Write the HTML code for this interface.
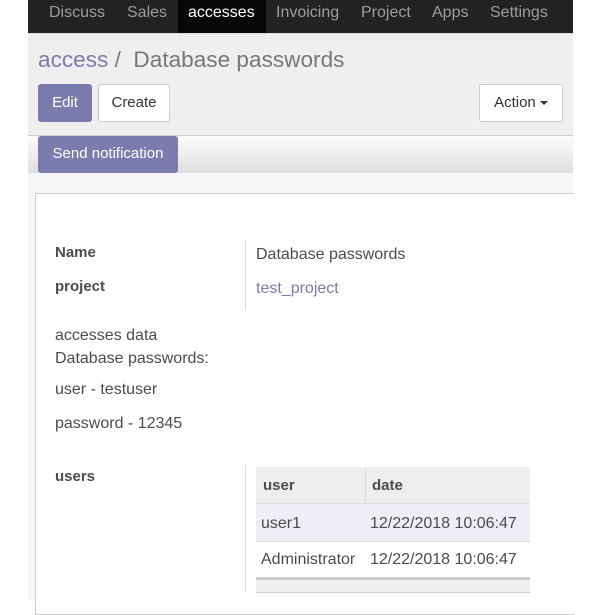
<!DOCTYPE html>
<html><head><style>
body{margin:0;width:600px;height:600px;overflow:hidden;background:#fff;font-family:"Liberation Sans",sans-serif;position:relative;color:#4c4c4c}
.a{position:absolute}
.nav{left:28px;top:0;width:545px;height:33px;background:#222}
.nav span{position:absolute;top:4px;font-size:16px;color:#9d9d9d}
.cp{left:28px;top:33px;width:545px;height:102px;background:#f0eeee;border-top:1px solid #ddd}
.btn{position:absolute;border-radius:3px;font-size:15px;text-align:center;box-sizing:border-box}
.bar{left:28px;top:135px;width:545px;height:38px;background:linear-gradient(#fcfcfc,#dedede);border-top:1px solid #ccc}
.bg{left:28px;top:173px;width:545px;height:427px;background:#f6f6f6}
.sheet{left:35px;top:193px;width:538px;height:420px;background:#fff;border:1px solid #ccc;border-right:none}
.t{position:absolute;font-size:16px;color:#4c4c4c}
b{color:#4c4c4c;font-size:15px}
</style></head><body>
<div class="a nav">
<span style="left:21px">Discuss</span><span style="left:99px">Sales</span>
<div style="position:absolute;left:150px;top:0;width:88px;height:33px;background:#080808"></div>
<span style="left:160px;color:#fff">accesses</span><span style="left:248px">Invoicing</span><span style="left:333px">Project</span><span style="left:404px">Apps</span><span style="left:462px">Settings</span>
</div>
<div class="a cp">
<div class="a" style="left:10px;top:13px;font-size:22.6px;color:#777"><span style="color:#7c7bad">access</span> /&nbsp; Database passwords</div>
<div class="btn" style="left:10px;top:50px;width:54px;height:38px;background:#7c7bad;color:#fff;line-height:38px">Edit</div>
<div class="btn" style="left:70px;top:50px;width:72px;height:38px;background:#fff;border:1px solid #ccc;color:#333;line-height:36px">Create</div>
<div class="btn" style="left:451px;top:50px;width:84px;height:38px;background:#fff;border:1px solid #ccc;color:#333;line-height:36px">Action <span style="display:inline-block;width:0;height:0;border-left:4px solid transparent;border-right:4px solid transparent;border-top:4px solid #333;vertical-align:middle"></span></div>
</div>
<div class="a bar"><div class="btn" style="left:10px;top:0;width:140px;height:37px;background:#7c7bad;color:#fff;line-height:36px">Send notification</div></div>
<div class="a bg"></div>
<div class="a sheet"></div>
<div class="t" style="left:55px;top:244px"><b>Name</b></div>
<div class="t" style="left:55px;top:278px"><b>project</b></div>
<div class="a" style="left:245px;top:240px;width:1px;height:70px;background:#ddd"></div>
<div class="t" style="left:256px;top:246px">Database passwords</div>
<div class="t" style="left:256px;top:280px;color:#7c7bad">test_project</div>
<div class="t" style="left:55px;top:324px;line-height:23px">accesses data<br>Database passwords:</div>
<div class="t" style="left:55px;top:381px">user - testuser</div>
<div class="t" style="left:55px;top:415px">password - 12345</div>
<div class="t" style="left:55px;top:468px"><b>users</b></div>
<div class="a" style="left:245px;top:465px;width:1px;height:127px;background:#ddd"></div>
<div class="a" style="left:256px;top:467px;width:274px;height:36px;background:#eee;border-bottom:1px solid #ddd"></div>
<div class="a" style="left:365px;top:467px;width:1px;height:36px;background:#ddd"></div>
<div class="t" style="left:263px;top:477px"><b>user</b></div>
<div class="t" style="left:372px;top:477px"><b>date</b></div>
<div class="a" style="left:256px;top:504px;width:274px;height:37px;background:#eeeef6;border-bottom:1px solid #ddd"></div>
<div class="t" style="left:261px;top:515px">user1</div>
<div class="t" style="left:370px;top:515px">12/22/2018 10:06:47</div>
<div class="t" style="left:261px;top:551px">Administrator</div>
<div class="t" style="left:370px;top:551px">12/22/2018 10:06:47</div>
<div class="a" style="left:256px;top:577px;width:274px;height:12px;background:#eee;border-top:3px solid #ccc;border-bottom:1px solid #ccc"></div>
</body></html>
